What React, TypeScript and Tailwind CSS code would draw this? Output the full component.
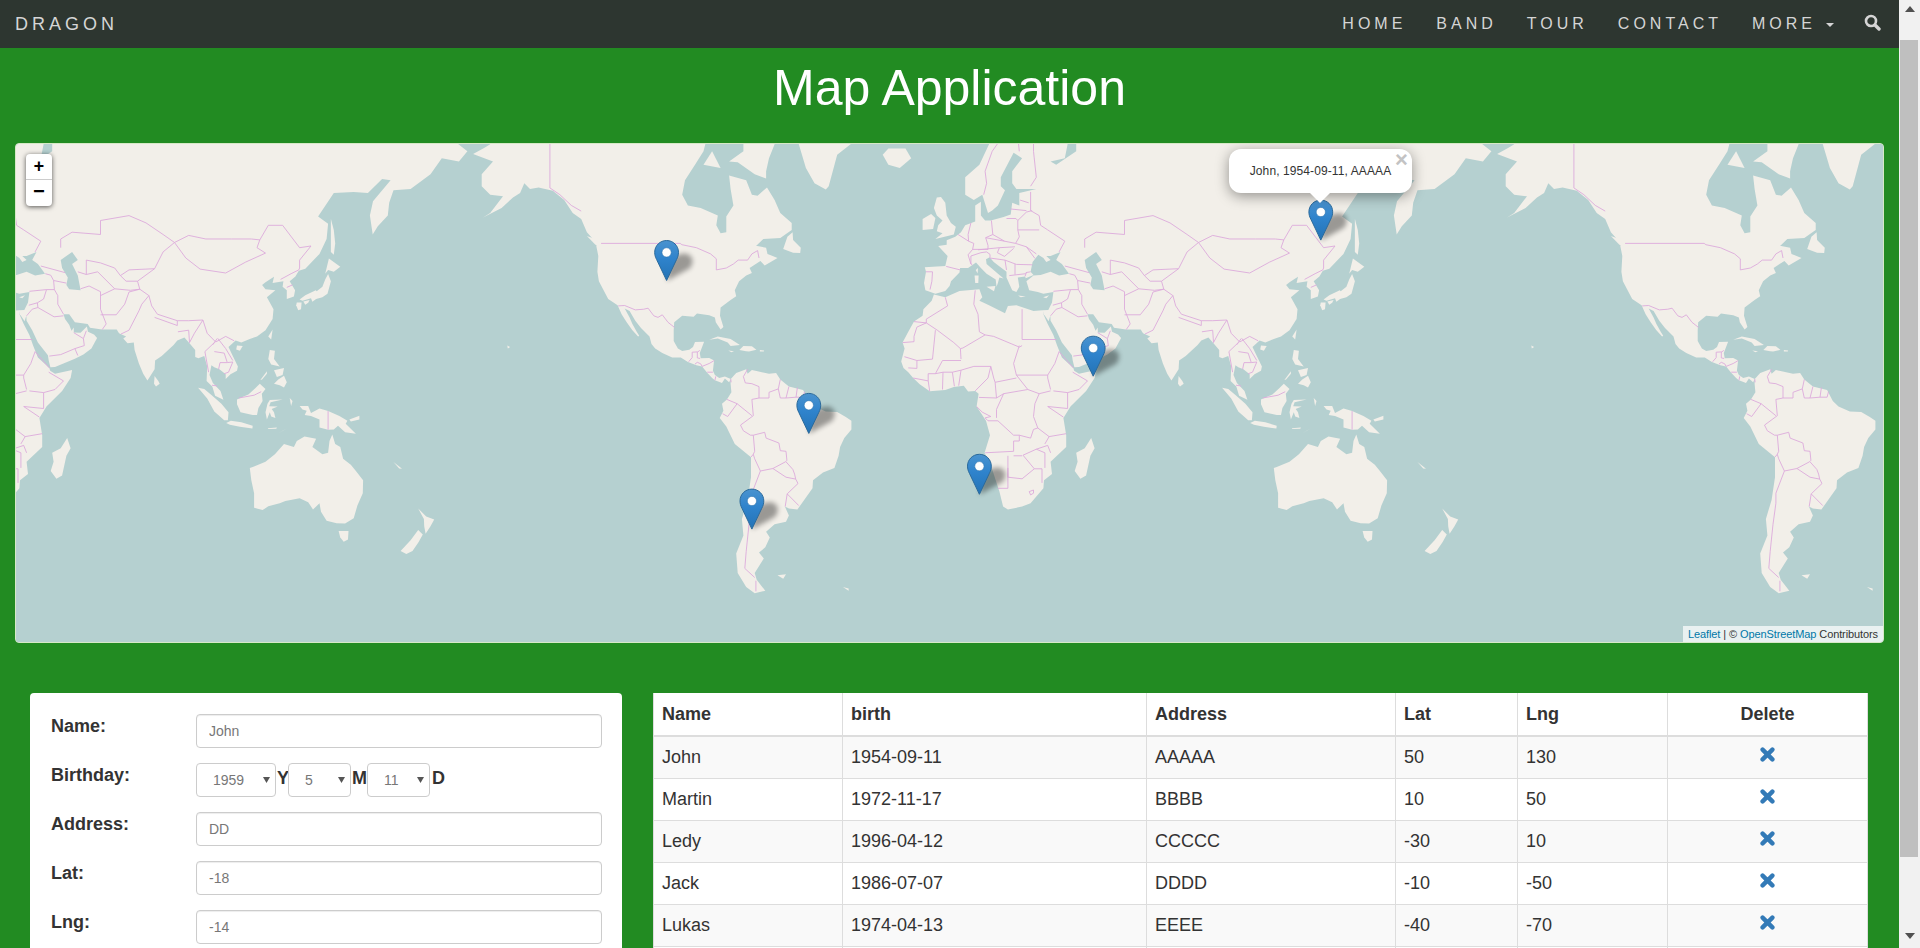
import React from "react";

const LAND: string[] = [
  // North America
  "-156.5,71.3 -162,70 -166,68.9 -162,67 -164,66.5 -168,65.6 -161,64.5 -165,62.5 -165,60.5 -162,59 -157.5,58.7 -162,55.5 -164.5,54.6 -158,56.5 -154,58.5 -151.5,59.3 -150,61 -148,60 -145,60.3 -140,59.7 -136,58 -133,55.5 -130,54.3 -128,51.5 -124.5,49 -124.7,48.4 -124,46 -124.3,42 -123.8,39.5 -122,36.8 -120.5,34.5 -117.2,32.7 -115.8,30 -114,27.5 -112,25 -110,23 -109.6,23.2 -110.5,24.5 -112,27 -113,29 -114.7,31.7 -113,31 -111,28 -109,25.7 -106,23 -105.3,20.5 -104,19 -101.5,17.5 -98,16 -95,16 -92.5,14.5 -89.5,13.4 -87.5,13 -85.7,10.8 -84,9 -83,8.2 -80.5,7.3 -79.5,8.8 -78,7.5 -77.4,8.6 -79.5,9.5 -81.5,9 -83,10 -83.7,11.5 -83.3,15 -85,15.9 -88,15.8 -88.3,17.5 -87.5,19.5 -86.8,21.3 -90,21.2 -90.7,19.5 -92,18.6 -94.5,18.2 -96,19 -97.5,21.5 -97.5,25 -97.3,27.5 -94.5,29.5 -90.5,29.2 -89.3,30.2 -85,29.7 -83,29 -82.7,27.5 -81,25.2 -80,26 -81.2,29.5 -81,32 -77.5,34.2 -75.5,35.3 -76,37 -74.5,39.5 -72,41 -70,41.7 -70.8,43 -67,44.8 -65.5,43.6 -61,45.5 -64.5,46.5 -65,48 -69,48.5 -71,46.8 -66,50 -60,50.2 -56,52 -56,53.5 -60,55.5 -62,58 -64.7,60.3 -68,58.8 -70,59 -72,61.5 -78,62.3 -77.5,60 -76.5,57 -79,54.8 -79,51.5 -81,51.3 -82.5,53 -82,55 -88,56.5 -92.5,57 -94.5,59 -93.5,61.5 -90,64 -87,66 -85,69 -90,69 -95,69 -105,68 -115,68 -125,69.5 -135,69 -141,69.7 -150,70.5",
  "-65,61.8 -69,62.5 -75,64.4 -78,64.5 -73,66 -73,68 -78,70 -89,71 -80,74 -70,71 -62,67 -64,65 -65,63",
  "-87,64 -81,63.5 -84,66",
  "-44,59.9 -48,61 -51,63.5 -53.5,67 -54,70 -55,75 -70,77 -20,77 -20,70 -32,68 -40,65.5 -43,60.5",
  "-59,47.7 -55.5,46.8 -53,46.7 -52.8,48 -55.5,49.8 -55.7,51.5 -57.5,50.5",
  "-128,50.7 -125,50 -123.3,48.4 -125,48.7",
  "-85,21.9 -82,23 -77.5,22.2 -74.2,20.2 -77.5,19.9 -78.5,21 -82,22.3",
  "-74.4,18.5 -73,19.9 -70,19.8 -68.4,18.6 -71,18 -72,18.1",
  "-78.3,18.4 -76.3,18.1 -77.2,17.8",
  "-67.2,18.5 -65.7,18.4 -65.8,18 -67.2,18",
  "-156,20 -155,19.5 -155.8,19",
  // South America
  "-77.4,8.6 -75.5,10.7 -72,12 -71.5,10.5 -70,11.8 -68,11.3 -64,10.5 -61.5,10.7 -60,8.5 -57,6 -52,4.8 -50,1 -48,-1 -44,-2.7 -40,-2.9 -37,-4.7 -35,-6 -35,-9 -37.5,-12 -39,-15 -39.5,-18 -41,-22 -45,-23.5 -48.5,-26 -48.7,-28.5 -52,-32.5 -54,-34.8 -57,-34.5 -58.4,-34 -57,-36.5 -58,-38.3 -62,-39 -65,-41 -63.7,-42.5 -65.3,-45 -67.5,-46.3 -65.8,-47.7 -69,-51 -68.3,-52.5 -65.3,-54.8 -69,-55.3 -72,-54 -75,-51 -75.5,-46.5 -73,-42 -73.5,-37.5 -71.5,-32 -70.3,-25 -70.3,-18.5 -76,-14 -79,-8 -81.3,-5 -80,-2.5 -80.5,0 -78.8,1.5 -77.2,4 -77.5,7",
  "-61,-51.5 -58,-51.3 -59,-52.3",
  "-38,-54 -36,-54.3 -36,-54.8",
  // Africa
  "-6,35.8 -2,35 3,36.8 10,37.3 11,35 10,34 13,32.8 19,30.3 20,32.5 23,32.7 29,31 32.3,31.2 32.5,30 34,27 36,23.5 37.3,20 39,16 43,12.5 43.3,11.5 45,10.5 51,11.8 50.5,9 47.5,4.5 42,-1 39.5,-5 40.5,-11 40.5,-15 35,-20 35.5,-24 32.7,-26 32.5,-28.5 28,-33 25,-34 20,-34.8 18.3,-34 17,-29.5 14.5,-22.5 11.8,-17 13.7,-11 12.3,-6 9,-1 9.7,3.5 8.5,4.5 6,4.3 4.5,6.3 1,5.9 -2,4.8 -7.5,4.4 -11,6.8 -13.3,9 -15,11 -16.7,12.5 -17.5,14.7 -16.3,19 -17,21 -15,24.5 -13,27.7 -10,29.5 -9.7,31.5 -6.8,34",
  "49.3,-12 50.5,-15.5 49,-18 47.5,-24.5 45.5,-25.5 43.5,-23 44.5,-20 44,-17 47,-15.5",
  // Eurasia
  "25,71 31,70 41,67 40,65 35,64.5 37,64 44,66 44,68 54,68.5 68,68.5 67,72 73,73 80,73 100,77 113,74 130,71 140,72.5 160,69.7 170,70 180,69 190,66 187,64.5 181,65 177,62.5 170,60 164,59.8 162.5,57.5 162,55 158.5,52.8 156.7,51 155.7,55 156.8,57.8 163,61.5 160,61.7 155,59.3 150,59.5 143,59.3 137.5,54.8 141,53.3 140.5,50 138,46.5 133,42.8 130.7,42.3 129.5,40.8 127.5,39.5 129.4,37 129,35.2 126.5,34.5 126.5,37 125,38 125.3,39.5 121.5,39 122,40.7 119,39.2 117.8,38.5 119,37.3 122.5,37 119.5,35 121.8,31.5 121.5,28.5 119,25 116,23 113.5,22.2 110.5,21 108.5,21.7 106,19.5 107.5,16.5 109.3,13 109,11.5 106.7,10.3 105,8.7 105,10.3 102.8,12 101,12.7 100,13.4 99.3,10 100.5,7.3 103.2,4.5 104.2,1.4 101.3,2.8 100.3,6 98.3,8 98.5,13 97.5,16.5 95.4,15.8 94.3,16.2 94.3,18.5 92.3,20.8 90.5,22.7 88,21.7 86.7,20.2 82.5,16.5 80.2,15 80,12 78,8.9 77.5,8.1 76,10.5 74.5,14 73,18.5 72.7,21 70.5,20.8 69,22.3 70,23 67.5,24 66.7,25.2 61.5,25.2 57.3,25.8 56.5,27 52,27.5 50,30 48,30 48.5,28.5 50,26.7 50.8,24.8 51.6,25.9 51.6,24.3 54,24.2 56.2,26.2 56.6,24.5 58.7,23.6 59.8,22.5 57.8,19 55,17 52,15.6 45,12.8 43.4,12.7 42.8,15 42.5,16.8 39,21 37,25 35,28 34.9,29.5 34.3,27.8 33,29.5 32.5,30 32.3,31.2 34.2,31.3 35.5,33.5 36,36.5 32.5,36 30.5,36.5 27.5,37 26.5,39.5 29,41 31.5,41.2 35,42 38,41 41.5,41.5 39,44 37,45 38.5,47 35,46 33.5,46 35,45 33.5,44.5 32.5,45.5 30.7,46.3 28.7,44.5 28,42 29,41.2 26.3,40.3 26,40.8 23.5,40.5 24,38 23,36.5 21.5,37 19.5,40.5 19.5,42 15,44.5 13.6,45.7 12.3,45.2 12.5,44 16,41.8 18.5,40.2 17,40.5 16.5,39 16,38 15.7,40 12.5,41.5 10.5,43 8.8,44.4 6,43 3.2,43 3,41.8 0,39.5 -0.5,38.2 -2,36.8 -5.5,36 -9,37 -9.5,39 -8.8,42 -9.2,43.2 -2,43.5 -1.2,46 -4.5,48.4 -1.5,48.7 -1.5,49.7 1.5,50.5 3.5,51.5 5,53 8.5,53.8 8.5,57 10.5,57.7 10.5,55 12,54 14,54 18.5,54.7 21,55.2 21.5,57.5 24,57 24,59.3 30,60 23,60 21.5,61 21.5,63 25,65 22,65.8 17.5,62 17.5,60.5 19,59.8 16.5,57 14.5,56 13,55.5 11,59 8,58 5,59 5,62 10,64 14,67.5 19,70",
  "-5.5,50 1,51 1.7,52.7 0,53.5 -1.5,55 -2,57.5 -3.5,58.6 -5,58.5 -6,56.5 -5,55 -3,54 -4.5,53 -5,51.7 -3,51.3",
  "-10,52 -6.3,52.2 -5.5,54.5 -7,55.3 -10,54.3",
  "-24,65.5 -22,64 -18,63.5 -14,65 -16,66.4 -22,66.4",
  "12.5,38 15.6,38.2 15.1,36.7",
  "8.3,41 9.7,41 9.6,39 8.5,39",
  "8.7,42.5 9.5,43 9.4,41.6",
  "23.6,35.5 26.3,35.2 24.5,35",
  "32.4,35 34.5,35.6 33.5,34.7",
  "80,9.7 81.3,8 81.8,7 80.5,6 79.8,7",
  "121.5,25.2 121,22 120,23",
  "109,20 111,19.9 110,18.3 108.7,18.7",
  "142,54.3 143,52 143.5,49 143,46.3 142,47 142,50",
  "140,41.5 141.3,45.4 145.3,43.3 143,42 141,42.5",
  "141,41.4 142,39.5 140.8,36 139,35 136.8,34.5 135.5,33.7 135,34.7 132,34 131,34.4 133,35.6 136.7,37 137,36.7 139,38 140,40",
  "132.3,33.8 134.5,34.2 134,33.4 133,32.8",
  "130,33.5 131.7,33.5 131.5,31.5 130.5,31.2 129.8,32.7",
  "120.5,18.5 122.3,18.3 122,15.5 124,13 121,13.7 120,15.5",
  "122,11.7 125.5,12.5 125,10 123,9.3",
  "122,7 123.5,8.5 125.5,9.8 126.5,7.5 125.5,5.7 124,6.5",
  "117.2,8.3 119.5,11.3 119.5,10.5 117.8,8.5",
  "95.3,5.6 97.5,5.2 100.3,2.8 103.5,0 106,-3 105.8,-5.8 104.5,-5.8 101,-2.7 98.5,1.8",
  "105.2,-6.8 106.8,-6 110.5,-6.5 114.5,-7.7 114.4,-8.7 110,-8.1 106.5,-7.4",
  "109,1.5 111.3,2.5 113,3.2 115.5,5.5 117,7 119,5.2 117.7,3.5 118,1 116.5,-1.5 116,-4 114.5,-4 110.2,-3 109,-0.2",
  "119.5,-5.5 120.5,-3 121,-4.5 122.5,-5 122,-3 121.2,-1.9 123.3,-1 120.3,-0.9 120.8,0.5 125,1.5 120.5,1.3 119.7,0 119,-3",
  "123.5,-10.3 127,-8.4 125,-9.5",
  "119.8,-8.6 123,-8.3 122.8,-8.8 120,-8.9",
  "127.5,2 128.5,1 128,-0.8",
  "131,-0.8 134,-0.8 135,-3.3 138,-1.7 141,-2.6 145,-4.3 147.8,-6 147.2,-7 150.8,-10.5 147,-10 144.5,-7.7 143,-9 141,-9.1 138,-8.3 138,-5.5 135,-4.3 132.8,-4 133.5,-2.5 132,-2",
  "148.5,-5.5 152,-4.2 152,-5.5 149,-6.2",
  "113.5,-22 114,-26 115,-30 115,-34.3 118,-35 120,-33.9 124,-33 126,-32.3 131,-31.5 134,-32.7 135.7,-34.8 138,-33 138.5,-35.5 140.5,-38 144,-38.7 147,-38.8 150,-37.3 151.3,-33.7 153.2,-30 153.3,-26 150.8,-23 149,-21 146.3,-19 145.3,-15 143.5,-14 142.5,-10.8 141.5,-13 141,-17 139,-17.5 135.5,-15 136.8,-12.2 132.7,-11.5 130,-13 129,-15 125.5,-14 122.3,-17.5 119,-20 114.5,-21.7",
  "144.7,-40.8 148.2,-40.8 148,-43 146.5,-43.6 145.3,-42.5",
  "172.7,-34.5 175.5,-36.8 178.3,-37.7 177,-39.5 175.3,-41.5 174.8,-39.5 174.7,-37.5",
  "172.7,-40.5 174.3,-41.7 172.8,-43.7 170.7,-45.9 168.5,-46.6 166.5,-45.9 170,-43.2",
  "164,-20.1 167,-22.3 166,-22.2",
];

const WATER: string[] = [
  "47,45 51,47 53,45 51,44 53,41 54,37 50,37.3 49,38.5 49.5,40.5 47.5,43",
];

const BORDERS: string[] = [
  // North America
  "-141,70 -141,60.2 -137.5,59 -133.5,57 -130,55.9",
  "-123,49 -95.2,49 -94.6,48.7 -89.5,48 -84.5,46.5 -82.5,45.3 -82.5,42.5 -79,43 -76.5,44 -74.8,45 -71.5,45 -70,46.5 -68,47.3 -67.5,45.5",
  "-117,32.5 -114.7,32.6 -111,31.3 -108,31.5 -106.5,31.8 -104.5,29.5 -103,29 -101.5,29.8 -99.5,27.5 -97.2,25.9",
  "-92.2,14.6 -91,16 -91,17.8 -89,17.9 -88.3,18.4",
  "-89.2,17.9 -89.2,15.9 -88.2,15.7",
  "-90,13.8 -89.2,14.4 -88,13.9 -87.5,13",
  "-87.5,13 -85,14 -83.2,15",
  "-85.7,11 -83.7,11",
  "-83,8.2 -82.7,9.6",
  "-77.4,8.6 -77.3,7.5",
  // South America
  "-71.5,12 -73,9.5 -72.3,7.3 -70,7 -67.5,6 -67.5,2",
  "-67.5,2 -64,2 -64,4 -60.7,5.2",
  "-60,8.5 -60.7,5.2",
  "-57,6 -58,2",
  "-54,5.7 -54.5,2.3",
  "-60.7,5.2 -60,2 -58,2 -54.5,2.3 -52,2.3 -51.5,4.2",
  "-67.5,2 -70,1.5 -69.5,-4.2",
  "-69.5,-4.2 -74,-7.5 -73,-9.5 -70.5,-11 -69.5,-11",
  "-69.5,-11 -65.5,-10 -65,-12 -60.5,-13.7 -60,-16.3 -58,-16.5 -57.7,-19.5 -58.2,-20",
  "-58.2,-20 -62.6,-22.2 -58,-25 -54.6,-25.6 -55,-24 -55.6,-22.5 -58,-20",
  "-62.6,-22.2 -67,-23 -69,-19 -69.5,-17.5",
  "-69.5,-11 -69,-16.5 -69.5,-17.5 -70.3,-18.4",
  "-67,-23 -70,-30 -70,-33 -71,-39 -72,-46 -72.5,-50 -69,-52",
  "-68.6,-52.7 -68.6,-54.9",
  "-78.8,1.5 -75.2,0 -78.5,-4.5 -80.3,-3.5",
  "-75.2,0 -70,-4.2",
  "-54.6,-25.6 -53.8,-27 -57.6,-30.2",
  "-57.6,-30.2 -53.5,-33.7",
  "-57.6,-30.2 -58.3,-34",
  // Europe
  "20,69 14.5,66 12,63 12.5,61 11.5,59",
  "24,66 23.5,68 20.5,69 25,69 29,69.5",
  "28,60.5 30,62 29,66 29,69.5",
  "28,59.5 28,56 31,55 31.5,53 34,52 40,49.5 38,47",
  "24.3,58 27.3,57.5",
  "21,56.3 26.5,56",
  "14.2,54 14.7,51 18.8,49.5 22.7,49 24,50.5 23.5,52 23.5,54 22.8,54.4 19.5,54.4",
  "23.5,52 31,52",
  "23.5,54 26.5,55.7 28.5,56",
  "7,53.5 6,51 6.2,49.5 8,49 7.6,47.6 13,47.6 13,48.5 12.2,50.3 14.7,51",
  "2.5,51 6.2,49.5",
  "7.6,47.6 6,46.3 7,44 7.5,43.8",
  "-1.7,43.4 3.2,42.5",
  "-8.8,42 -6.5,42 -6.7,39.5 -7.4,37.2",
  "7,44 7,46 10.5,46.8 12.5,47 13.7,46.4 13.7,45.6",
  "9.5,47.5 17,48",
  "12.2,50.3 18.8,49.5",
  "17,48 22.5,48.2",
  "17,48 16.3,46.8 18.8,45.9 22,47.8",
  "13.6,45.5 19,45 23,43.9 28.6,43.8",
  "22.7,49 26.5,48.2 29.5,45.4",
  "19,45 19.5,42.5",
  "22.5,44 22.5,41.3",
  "20.5,41 26.3,41.5",
  "26.5,48.2 30,46.5",
  // Middle East and Caucasus
  "26.3,41.8 28,42",
  "26,40.8 26.5,41.8",
  "36,36.7 42,37.2 44.8,37.2 44.5,39.7 43.5,41.1 41.6,41.5",
  "40,43.5 48.5,41.8",
  "44.5,39.7 49,39",
  "42,37.2 41,34.5 38.8,33.4 35.8,32.7",
  "39,32 44.7,29.2 48,29.5",
  "44.8,37.2 46,35.5 46,33 48,30",
  "35,29.5 37,31.5 39,32 38.8,33.4",
  "43,16.5 47,17 52,19 55.3,20 55,22.3 51.6,24.2",
  "52,19 53,16.7",
  "55,22.3 56,24.8",
  "54,37.4 57,38.2 61,36.6 61,31.5 63,27 61.6,25.2",
  "61,29.8 66.5,29.8 69.5,33 71,36.5 74.8,37.3",
  "61,35.5 66,37.4 71.5,37 74.8,37.3",
  "53,42 56,41.3 56,45 61,44.3 66,43 68,41 71,42.5 80,42.8",
  "66,37.4 60,42 56,41.3",
  "68,41 70,39.5 74,39.5",
  "47,48 47,50 51,51.5 61,51 61,54 71,55 77,53.5 83,51 87,49.2",
  "87,49.2 92,50.8 98,50 107,50 114,50 117,49.8",
  "87,49.2 91,45.5 96,42.7 105,41.7 112,44.5 119,46.7 116,48 117,49.8",
  "117,49.8 120,53 125,53 131,48 135,48.4 131,45 131,43 130.7,42.5",
  "80,42.8 83,47 87,49.2",
  "80,42.8 74,39.5 74.8,37.3 78,35.5 79,32.5 81,30 88,28 92,28 97,28.2 98.5,24 101.5,21.2 105,23 108,21.6",
  "124.3,40 128,41.5 130.7,42.5",
  "126.5,37.8 128.5,38.5",
  "68.2,23.8 71,25 74.5,31 75.5,33 78,35.5",
  "80,29 88,26.5 88,28",
  "88.2,24.5 92,25 92.3,21",
  "92.3,21 94,24 97,28.2",
  "101,21 97.7,18 99,11",
  "100.5,20.3 102,22.3",
  "101,18 104.5,17.5 105.5,14.5",
  "102.2,22.4 105,19 107.5,15",
  "102.5,12 103,14.3 105.5,14.3 107.5,14.5 106,11 104.5,10.5",
  "100.2,6.5 102,6.2",
  "109.6,2 115,3 117.5,4.2",
  "141,-2.6 141,-9.1",
  // Africa
  "-2,35 -1.2,32.5 -8.7,28.5 -8.7,27.3",
  "-13,27.7 -8.7,27.3 -4.8,25 1,21 3.3,19",
  "-8.7,27.3 -12,26 -13,23 -13,21.3 -17,21",
  "-5.5,25 -6.5,15.5 -12,15 -16.4,16.3",
  "8.5,37 8,33 9.5,30 10,24.5 12,23.5",
  "12,23.5 15,23 24,19.5",
  "25,31.5 25,22",
  "25,22 37,22",
  "24,19.5 25,20",
  "24,20 22,14 23,10",
  "3.3,19 4.2,19.2 12,23.5",
  "3.3,19 3.5,15.5",
  "3.5,11.7 8,13 14,13",
  "14,13 15,9 15.5,7.5 23,9",
  "8.5,4.5 13,9 14,13",
  "2.7,6.3 3.5,11.7",
  "1.2,6.1 0.5,11",
  "-3,5 -2.8,11",
  "-5.5,10.5 -2.8,11 0.5,11 3.5,11.7",
  "-5.5,10.5 -3,15 0,15 3.5,15",
  "-13.3,9 -8,8 -8,10.5 -5.5,10.5",
  "-15,12.5 -12,12.3 -12,15",
  "-7.5,4.4 -8,8",
  "9.8,2.2 16,2",
  "16,2 18.5,3.5 27,5 31,3.5",
  "15.5,7.5 16,2",
  "9,-1 11,-3 14,-4.5 12,-5 13,-6 16.5,-6 22,-11 24,-11 24,-13 22,-13 22,-16.5 12,-17",
  "18.5,3.5 16,-2 16,-5",
  "31,3.5 29.5,0 29,-4.5 30.5,-8.5",
  "24,-11 28,-12 29,-9 30.5,-8.5",
  "23,10 27,5",
  "23,10 34,10",
  "34,9 35,5",
  "31,3.5 35,4.5",
  "34,-1 41,-1.7",
  "41,-1.7 41,3.9",
  "36.5,14 38,18 43,12.5",
  "42.8,11 48,8 45,5 41,3.9 36,4.5",
  "36.5,14 34,10 34,9",
  "34,-1 39.5,-4.7",
  "30.5,-8.5 34.5,-11.5 40.5,-10.5",
  "22,-18 25,-18",
  "20,-18 20,-28.5 16.5,-28.5",
  "20,-22 20,-25 25,-25.5 29.3,-22.3 25.3,-17.8",
  "25.3,-17.8 30,-15.8 33,-17 33,-22",
  "30,-15.8 34,-14.5 35,-17",
  "34.5,-11.5 33,-14",
  "29.3,-22.3 32,-22.3 32,-26.8",
  "27.5,-29.5 29,-29 29,-30 28,-30.5 27.5,-29.5",
];

const X0 = 439;
const Y0 = -108.3;
const mx = (lon: number) => ((lon + 180) / 360) * 1024;
const my = (lat: number) =>
  512 - (Math.log(Math.tan(Math.PI / 4 + (lat * Math.PI) / 360)) / (2 * Math.PI)) * 1024;
const project = (s: string) =>
  s
    .split(" ")
    .map((p) => {
      const [lon, lat] = p.split(",").map(Number);
      return `${mx(lon).toFixed(1)},${my(lat).toFixed(1)}`;
    })
    .join(" ");

const PINS: [number, number][] = [
  [40, -100],
  [-40, -70],
  [-10, -50],
  [-30, 10],
  [10, 50],
  [50, 130],
];

const ROWS = [
  ["John", "1954-09-11", "AAAAA", "50", "130"],
  ["Martin", "1972-11-17", "BBBB", "10", "50"],
  ["Ledy", "1996-04-12", "CCCCC", "-30", "10"],
  ["Jack", "1986-07-07", "DDDD", "-10", "-50"],
  ["Lukas", "1974-04-13", "EEEE", "-40", "-70"],
];

function Pin({ x, y }: { x: number; y: number }) {
  return (
    <g transform={`translate(${(x - 12.5).toFixed(1)} ${(y - 39.5).toFixed(1)})`}>
      <path d="M12.5 41 L15 24 Q22 12 33 14 Q42 18 36 28 Z" fill="#000" opacity="0.36" filter="url(#pinBlur)" />
      <path
        d="M12.5 .6C5.9 .6 .6 5.8 .6 12.4c0 2.6 .7 5 1.9 7.2L12.5 40.6l10-21c1.2-2.2 1.9-4.6 1.9-7.2C24.4 5.8 19.1 .6 12.5 .6z"
        fill="url(#pinFill)"
        stroke="#2b6a9b"
        strokeWidth="1"
      />
      <circle cx="12.5" cy="12.5" r="4.6" fill="#fff" stroke="#2a6ea6" strokeWidth="0.5" />
    </g>
  );
}

function WorldMap() {
  return (
    <svg viewBox="16 144 1867 498" className="block h-full w-full">
      <defs>
        <linearGradient id="pinFill" x1="0" y1="0" x2="0" y2="1">
          <stop offset="0" stopColor="#4a93cf" />
          <stop offset="0.45" stopColor="#2f83cc" />
          <stop offset="1" stopColor="#2473b5" />
        </linearGradient>
        <filter id="pinBlur" x="-50%" y="-50%" width="200%" height="200%">
          <feGaussianBlur stdDeviation="2.8" />
        </filter>
        <g id="world">
          {LAND.map((p, i) => (
            <polygon key={i} points={project(p)} fill="#f2efe9" />
          ))}
          {WATER.map((p, i) => (
            <polygon key={i} points={project(p)} fill="#b5d0d0" />
          ))}
          {BORDERS.map((p, i) => (
            <polyline key={i} points={project(p)} fill="none" stroke="#ddaadb" strokeWidth="0.9" />
          ))}
        </g>
      </defs>
      <rect x="0" y="0" width="1920" height="948" fill="#b5d0d0" />
      <use href="#world" x={X0 - 1024} y={Y0} />
      <use href="#world" x={X0} y={Y0} />
      <use href="#world" x={X0 + 1024} y={Y0} />
      {PINS.map(([lat, lon], i) => (
        <Pin key={i} x={X0 + mx(lon)} y={Y0 + my(lat)} />
      ))}
    </svg>
  );
}

function Remove() {
  return (
    <svg viewBox="0 0 15 15" className="mx-auto mt-[-6px] block h-[15px] w-[15px]">
      <path d="M2.6 2.6L12.4 12.4M12.4 2.6L2.6 12.4" stroke="#337ab7" strokeWidth="4.4" strokeLinecap="round" />
    </svg>
  );
}

function Field({ label, value }: { label: string; value: string }) {
  return (
    <div className="flex h-[34px]">
      <label className="w-[145px] text-[18px] font-bold leading-[25px] text-[#333]">{label}</label>
      <input
        readOnly
        value={value}
        className="h-[34px] w-[406px] rounded-[4px] border border-[#ccc] bg-white px-[12px] text-[14px] text-[#777] shadow-[inset_0_1px_1px_rgba(0,0,0,0.075)] outline-none"
      />
    </div>
  );
}

function Pick({ value, w }: { value: string; w: string }) {
  return (
    <span className={`relative block h-[34px] ${w}`}>
      <select
        value={value}
        onChange={() => {}}
        className="h-[34px] w-full appearance-none rounded-[4px] border border-[#ccc] bg-white pl-[16px] text-[14px] font-normal text-[#777] outline-none"
      >
        <option>{value}</option>
      </select>
      <svg viewBox="0 0 7 6" className="pointer-events-none absolute right-[6px] top-[14px] h-[6px] w-[7px]">
        <path d="M0 0H7L3.5 6Z" fill="#555" />
      </svg>
    </span>
  );
}

const NAV = ["HOME", "BAND", "TOUR", "CONTACT"];

export default function App() {
  return (
    <div className="flex h-[948px] overflow-hidden bg-[#f1f1f1] font-['Liberation_Sans',Arial,sans-serif] text-[#333]">
      <div className="h-[948px] w-[1899px] shrink-0 overflow-hidden bg-[#228b22]">
        <nav className="flex h-[48px] items-center justify-between bg-[#2d3630] px-[15px] text-[#d5d5d5]">
          <span className="text-[18px] tracking-[4px]">DRAGON</span>
          <ul className="mr-[-15px] flex items-center text-[16px] tracking-[4px]">
            {NAV.map((n) => (
              <li key={n} className="px-[15px]">
                {n}
              </li>
            ))}
            <li className="flex items-center px-[15px]">
              MORE
              <span className="ml-[10px] mt-[2px] h-0 w-0 border-x-[4px] border-t-[4px] border-x-transparent border-t-[#d5d5d5]" />
            </li>
            <li className="pl-[15px] pr-[18px]">
              <svg viewBox="0 0 17 17" className="mt-[-4px] block h-[17px] w-[17px]">
                <circle cx="7" cy="7" r="5" fill="none" stroke="#d5d5d5" strokeWidth="2.6" />
                <path d="M11 11L15 15" stroke="#d5d5d5" strokeWidth="3.4" strokeLinecap="round" />
              </svg>
            </li>
          </ul>
        </nav>

        <h1 className="h-[95px] pt-[13px] text-center text-[50px] font-normal leading-[55px] text-white">
          Map Application
        </h1>

        <div className="relative mx-[15px] h-[500px] overflow-hidden rounded-[4px] border border-[#d6e9c6] bg-[#b5d0d0]">
          <WorldMap />
          <div className="absolute left-[10px] top-[10px] w-[26px] rounded-[4px] bg-white font-['Liberation_Mono',monospace] font-bold text-black shadow-[0_1px_5px_rgba(0,0,0,0.65)]">
            <div className="h-[26px] rounded-t-[4px] border-b border-[#ccc] text-center text-[18px] leading-[27px]">+</div>
            <div className="h-[26px] rounded-b-[4px] text-center text-[20px] leading-[26px]">−</div>
          </div>
          <div className="absolute left-[1213px] top-[5px] h-[44px] w-[183px] rounded-[12px] bg-white text-center text-[12px] leading-[44px] tracking-[0.1px] text-[#333] shadow-[0_3px_14px_rgba(0,0,0,0.4)]">
            John, 1954-09-11, AAAAA
            <span className="absolute right-[4px] top-0 text-[22px] font-bold leading-[22px] text-[#c3c3c3]">×</span>
          </div>
          <div className="absolute left-[1294px] top-[49px] h-0 w-0 border-x-[10.5px] border-t-[10px] border-x-transparent border-t-white" />
          <div className="absolute bottom-0 right-0 h-[16px] bg-[rgba(255,255,255,0.7)] px-[5px] text-[11px] leading-[16px] tracking-[-0.1px] text-[#333]">
            <span className="text-[#0078a8]">Leaflet</span> | © <span className="text-[#0078a8]">OpenStreetMap</span> Contributors
          </div>
        </div>

        <div className="mt-[50px] flex gap-[31px] pl-[30px]">
          <form className="flex h-[300px] w-[592px] shrink-0 flex-col gap-[15px] rounded-[4px] bg-white pl-[21px] pt-[21px]">
            <Field label="Name:" value="John" />
            <div className="flex h-[34px]">
              <label className="w-[145px] text-[18px] font-bold leading-[25px] text-[#333]">Birthday:</label>
              <div className="flex items-center text-[18px] font-bold leading-[25px]">
                <Pick value="1959" w="w-[80px]" />
                <span className="mt-[-4px] w-[12px] pl-[1px]">Y</span>
                <Pick value="5" w="w-[63px]" />
                <span className="mt-[-4px] w-[16px] pl-[1px]">M</span>
                <Pick value="11" w="w-[63px]" />
                <span className="mt-[-4px] pl-[2px]">D</span>
              </div>
            </div>
            <Field label="Address:" value="DD" />
            <Field label="Lat:" value="-18" />
            <Field label="Lng:" value="-14" />
          </form>

          <table className="h-fit w-[1214px] shrink-0 table-fixed border-collapse bg-white text-[18px] text-[#333]">
            <colgroup>
              <col className="w-[189px]" />
              <col className="w-[304px]" />
              <col className="w-[249px]" />
              <col className="w-[122px]" />
              <col className="w-[150px]" />
              <col className="w-[200px]" />
            </colgroup>
            <thead>
              <tr className="h-[43px] border-b-2 border-[#ddd]">
                {["Name", "birth", "Address", "Lat", "Lng"].map((h) => (
                  <th key={h} className="border-x border-[#ddd] px-[8px] text-left font-bold">
                    {h}
                  </th>
                ))}
                <th className="border-x border-[#ddd] px-[8px] text-center font-bold">Delete</th>
              </tr>
            </thead>
            <tbody>
              {ROWS.map((r, i) => (
                <tr key={r[0]} className={`h-[42px] border-b border-[#ddd] ${i % 2 === 0 ? "bg-[#f9f9f9]" : "bg-white"}`}>
                  {r.map((c, j) => (
                    <td key={j} className="border-x border-[#ddd] px-[8px]">
                      {c}
                    </td>
                  ))}
                  <td className="border-x border-[#ddd] px-[8px]">
                    <Remove />
                  </td>
                </tr>
              ))}
              <tr className="h-[42px] bg-white">
                {[0, 1, 2, 3, 4, 5].map((k) => (
                  <td key={k} className="border-x border-[#ddd]" />
                ))}
              </tr>
            </tbody>
          </table>
        </div>
      </div>

      <div className="flex h-[948px] w-[21px] shrink-0 flex-col">
        <div className="flex h-[40px] items-start justify-center pt-[6px]">
          <span className="h-0 w-0 border-x-[5px] border-b-[6px] border-x-transparent border-b-[#505050]" />
        </div>
        <div className="ml-[1px] mr-[2px] h-[817px] bg-[#bfbfbf]" />
        <div className="flex flex-1 items-end justify-center pb-[9px]">
          <span className="h-0 w-0 border-x-[5px] border-t-[6px] border-x-transparent border-t-[#505050]" />
        </div>
      </div>
    </div>
  );
}
